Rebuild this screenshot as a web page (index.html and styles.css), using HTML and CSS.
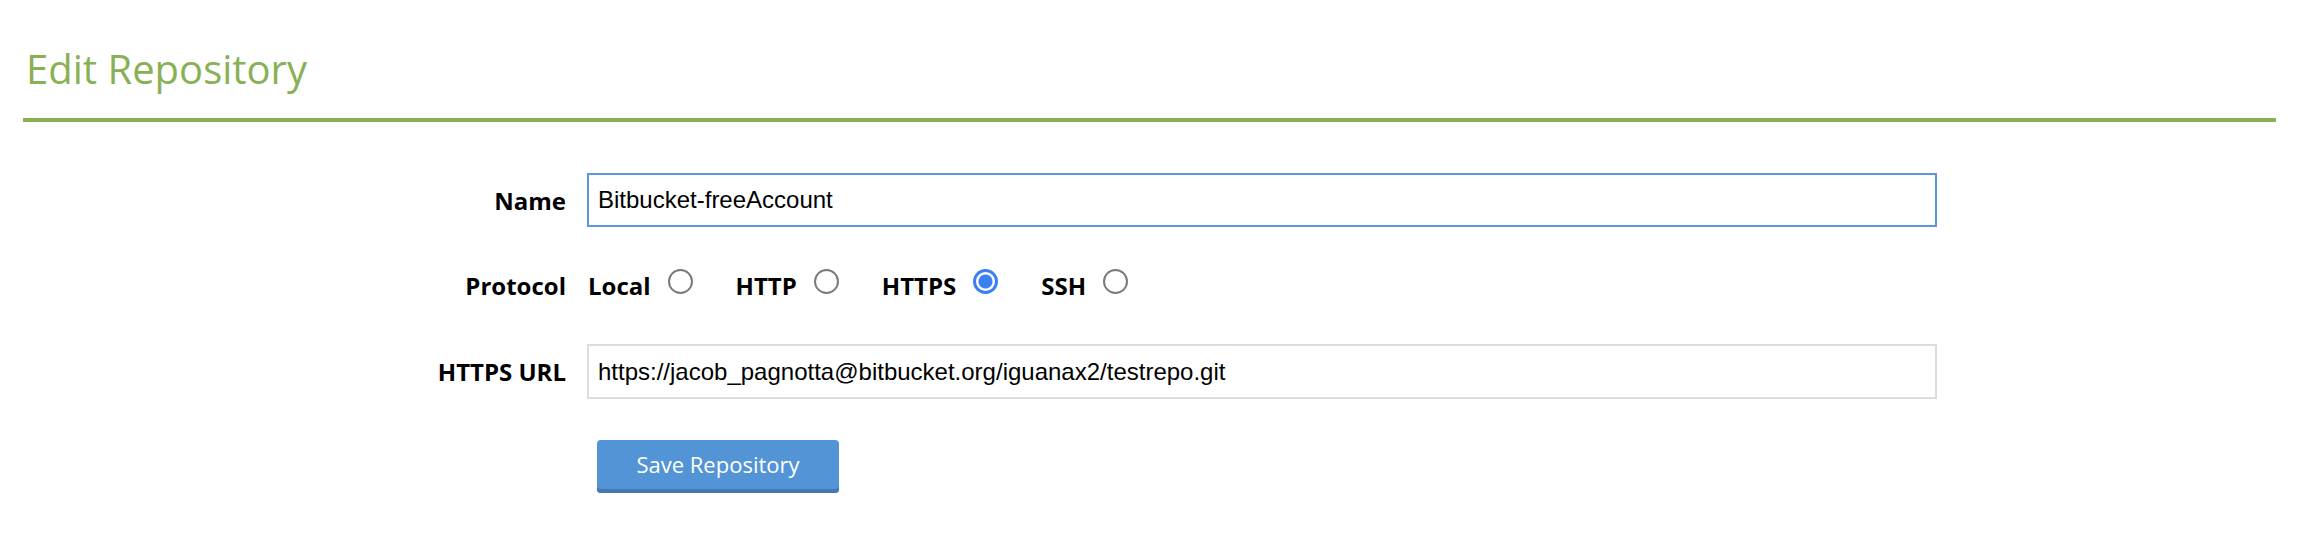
FILE: index.html
```html
<!DOCTYPE html>
<html>
<head>
<meta charset="utf-8">
<title>Edit Repository</title>
<link rel="stylesheet" href="styles.css">
</head>
<body>
<div class="page">
  <h1 class="title">Edit Repository</h1>
  <form class="form">
    <label class="label" for="name">Name</label>
    <input class="field field-focus" id="name" type="text" value="Bitbucket-freeAccount">

    <span class="label">Protocol</span>
    <div class="options">
      <label class="opt">Local <input class="radio" type="radio" name="proto"></label>
      <label class="opt">HTTP <input class="radio" type="radio" name="proto"></label>
      <label class="opt">HTTPS <input class="radio" type="radio" name="proto" checked></label>
      <label class="opt">SSH <input class="radio" type="radio" name="proto"></label>
    </div>

    <label class="label" for="url">HTTPS URL</label>
    <input class="field field-tall" id="url" type="text" value="https://jacob_pagnotta@bitbucket.org/iguanax2/testrepo.git">

    <span></span>
    <div class="actions">
      <button class="btn" type="button">Save Repository</button>
    </div>
  </form>
</div>
</body>
</html>
```

FILE: styles.css
```css
html, body {
  margin: 0;
  padding: 0;
  background: #ffffff;
}

.page {
  font-family: "Open Sans", "Liberation Sans", sans-serif;
  color: #000;
}

.title {
  margin: 0 22px 0 23px;
  padding: 42px 0 22px 3px;
  font-size: 40px;
  line-height: 54px;
  font-weight: 400;
  color: #88b156;
  border-bottom: 4px solid #88b156;
}

.form {
  display: grid;
  grid-template-columns: 566px 1350px;
  column-gap: 21px;
  row-gap: 41px;
  align-items: center;
  margin-top: 51px;
}

.label {
  text-align: right;
  font-size: 24px;
  line-height: 35px;
  font-weight: 700;
}

.field {
  box-sizing: border-box;
  height: 54px;
  width: 100%;
  margin: 0;
  padding: 0 9px;
  font-family: "Liberation Sans", Arial, sans-serif;
  font-size: 24px;
  color: #000;
  border: 2px solid #dcdcdc;
  border-radius: 0;
  outline: none;
  background: #fff;
}

.field-tall {
  height: 55px;
}

.field-focus {
  border-color: #5b97dc;
}

.options {
  display: flex;
  align-items: center;
  gap: 43px;
  padding-left: 1px;
  height: 35px;
}

.opt {
  display: flex;
  align-items: center;
  gap: 17px;
  font-size: 24px;
  line-height: 35px;
  font-weight: 700;
}

.radio {
  appearance: none;
  -webkit-appearance: none;
  box-sizing: border-box;
  width: 25px;
  height: 25px;
  margin: 0 0 9px 0;
  border: 2px solid #7a7a7a;
  border-radius: 50%;
  background: #fff;
}

.radio:checked {
  border: 3px solid #3b7ff5;
  background: radial-gradient(circle, #3b7ff5 0 6.5px, #fff 7.5px);
}

.actions {
  display: flex;
}

.btn {
  margin-left: 10px;
  width: 242px;
  height: 53px;
  padding: 0 0 4px;
  border: 0;
  border-radius: 4px;
  background: #5294d5;
  box-shadow: inset 0 -4px 0 #4478b0;
  color: #fff;
  font-family: "Open Sans", "Liberation Sans", sans-serif;
  font-size: 22px;
  line-height: 49px;
}
```
